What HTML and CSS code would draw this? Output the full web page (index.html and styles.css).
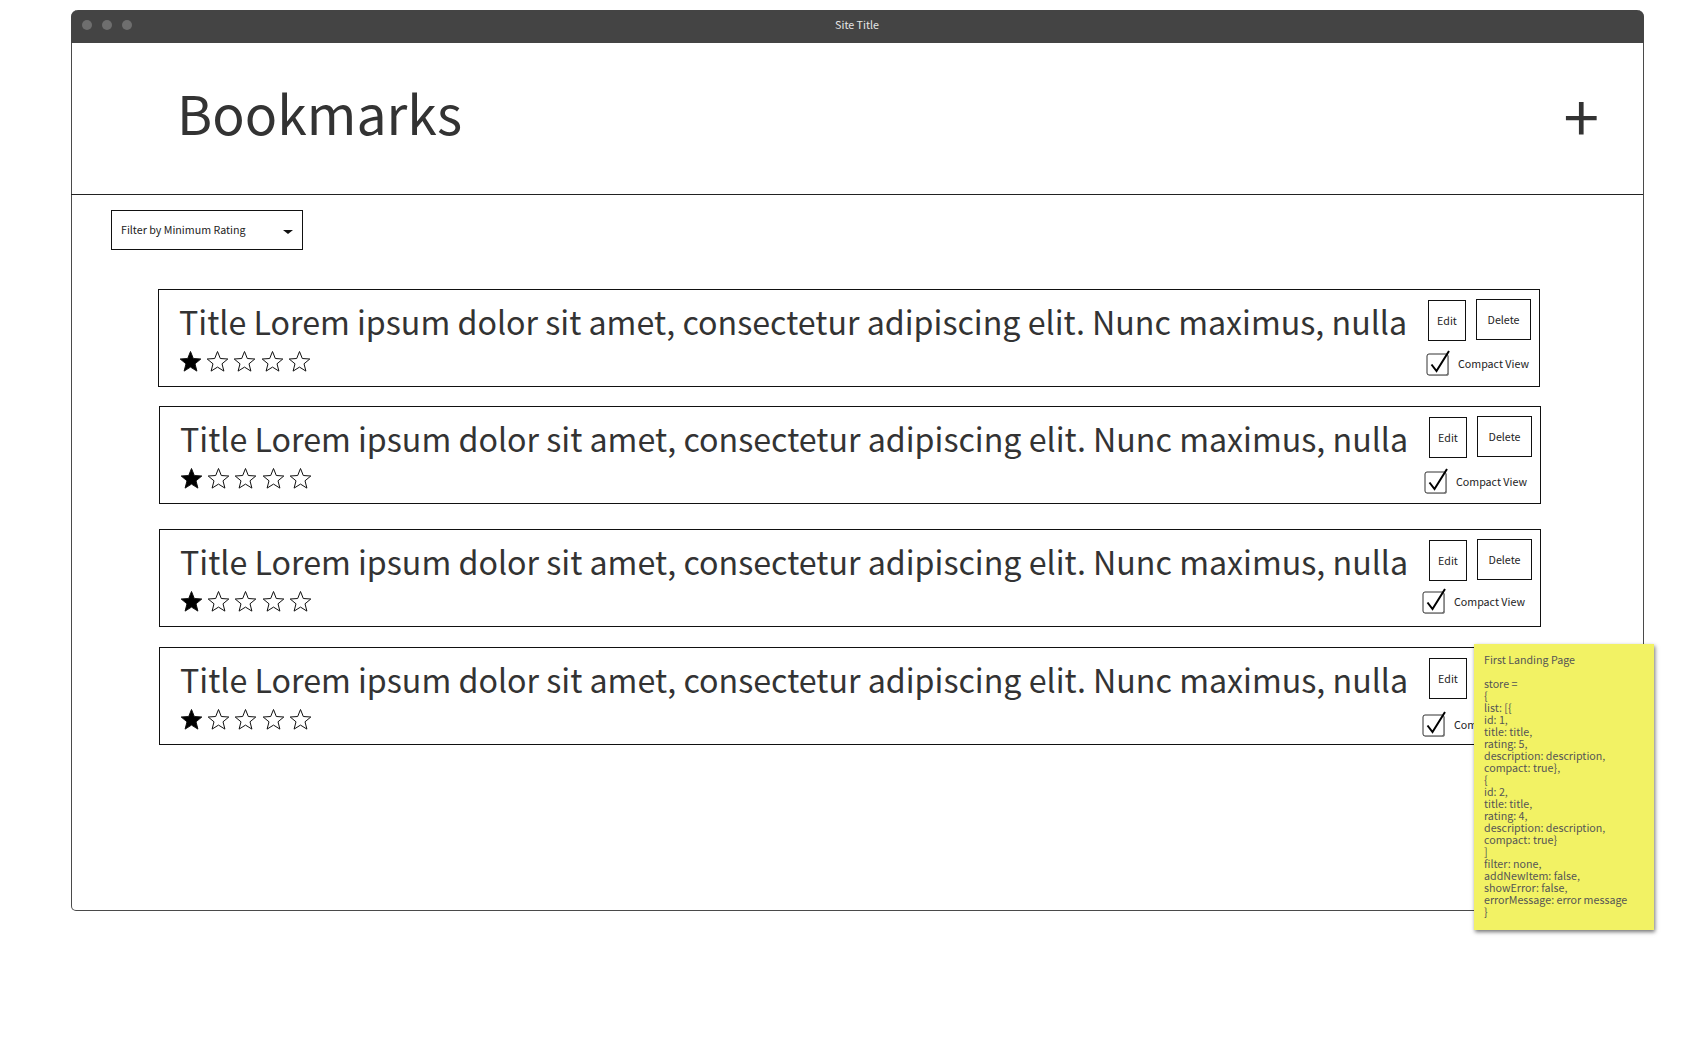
FILE: index.html
```html
<!DOCTYPE html>
<html lang="en">
<head>
<meta charset="utf-8">
<title>Site Title</title>
<link rel="stylesheet" href="styles.css">
</head>
<body>
<svg class="defs" width="0" height="0" aria-hidden="true">
  <defs>
    <path id="star" d="M11.5 1.5 L14.3 8.5 L21.8 9 L16 13.8 L17.9 21.1 L11.5 17.1 L5.1 21.1 L7 13.8 L1.2 9 L8.7 8.5 Z"/>
    <g id="check">
      <rect x="1" y="4" width="21" height="21" rx="2" fill="#fff" stroke="#333" stroke-width="1"/>
      <path d="M22.5 6 V24 Q22.5 25.5 21 25.5 H3" fill="none" stroke="#888" stroke-width="1"/>
      <path d="M5.5 14.5 L10.5 21 L23 1" fill="none" stroke="#000" stroke-width="2"/>
    </g>
  </defs>
</svg>
<main class="window">
  <div class="titlebar">
    <div class="dots"><i class="dot"></i><i class="dot"></i><i class="dot"></i></div>
    <span class="site-title">Site Title</span>
  </div>
  <header class="page-header">
    <h1 class="heading">Bookmarks</h1>
    <span class="add">+</span>
  </header>
  <div class="filter">
    <span class="filter-label">Filter by Minimum Rating</span>
    <span class="caret"></span>
  </div>
  <section class="list">
    <article class="card card-first">
      <div class="info">
        <h2 class="card-title">Title Lorem ipsum dolor sit amet, consectetur adipiscing elit. Nunc maximus, nulla</h2>
        <div class="stars">
          <svg class="star on" viewBox="0 0 23 23"><use href="#star"/></svg>
          <svg class="star" viewBox="0 0 23 23"><use href="#star"/></svg>
          <svg class="star" viewBox="0 0 23 23"><use href="#star"/></svg>
          <svg class="star" viewBox="0 0 23 23"><use href="#star"/></svg>
          <svg class="star" viewBox="0 0 23 23"><use href="#star"/></svg>
        </div>
      </div>
      <div class="actions">
        <div class="buttons"><span class="btn btn-edit">Edit</span><span class="btn btn-delete">Delete</span></div>
        <div class="compact"><svg class="checkbox" viewBox="0 0 24 26"><use href="#check"/></svg><span>Compact View</span></div>
      </div>
    </article>
    <article class="card card-second">
      <div class="info">
        <h2 class="card-title">Title Lorem ipsum dolor sit amet, consectetur adipiscing elit. Nunc maximus, nulla</h2>
        <div class="stars">
          <svg class="star on" viewBox="0 0 23 23"><use href="#star"/></svg>
          <svg class="star" viewBox="0 0 23 23"><use href="#star"/></svg>
          <svg class="star" viewBox="0 0 23 23"><use href="#star"/></svg>
          <svg class="star" viewBox="0 0 23 23"><use href="#star"/></svg>
          <svg class="star" viewBox="0 0 23 23"><use href="#star"/></svg>
        </div>
      </div>
      <div class="actions">
        <div class="buttons"><span class="btn btn-edit">Edit</span><span class="btn btn-delete">Delete</span></div>
        <div class="compact"><svg class="checkbox" viewBox="0 0 24 26"><use href="#check"/></svg><span>Compact View</span></div>
      </div>
    </article>
    <article class="card card-third">
      <div class="info">
        <h2 class="card-title">Title Lorem ipsum dolor sit amet, consectetur adipiscing elit. Nunc maximus, nulla</h2>
        <div class="stars">
          <svg class="star on" viewBox="0 0 23 23"><use href="#star"/></svg>
          <svg class="star" viewBox="0 0 23 23"><use href="#star"/></svg>
          <svg class="star" viewBox="0 0 23 23"><use href="#star"/></svg>
          <svg class="star" viewBox="0 0 23 23"><use href="#star"/></svg>
          <svg class="star" viewBox="0 0 23 23"><use href="#star"/></svg>
        </div>
      </div>
      <div class="actions">
        <div class="buttons"><span class="btn btn-edit">Edit</span><span class="btn btn-delete">Delete</span></div>
        <div class="compact"><svg class="checkbox" viewBox="0 0 24 26"><use href="#check"/></svg><span>Compact View</span></div>
      </div>
    </article>
    <article class="card card-fourth">
      <div class="info">
        <h2 class="card-title">Title Lorem ipsum dolor sit amet, consectetur adipiscing elit. Nunc maximus, nulla</h2>
        <div class="stars">
          <svg class="star on" viewBox="0 0 23 23"><use href="#star"/></svg>
          <svg class="star" viewBox="0 0 23 23"><use href="#star"/></svg>
          <svg class="star" viewBox="0 0 23 23"><use href="#star"/></svg>
          <svg class="star" viewBox="0 0 23 23"><use href="#star"/></svg>
          <svg class="star" viewBox="0 0 23 23"><use href="#star"/></svg>
        </div>
      </div>
      <div class="actions">
        <div class="buttons"><span class="btn btn-edit">Edit</span><span class="btn btn-delete">Delete</span></div>
        <div class="compact"><svg class="checkbox" viewBox="0 0 24 26"><use href="#check"/></svg><span>Compact View</span></div>
      </div>
    </article>
  </section>
</main>
<aside class="note">First Landing Page

store =
{
list: [{
id: 1,
title: title,
rating: 5,
description: description,
compact: true},
{
id: 2,
title: title,
rating: 4,
description: description,
compact: true}
]
filter: none,
addNewItem: false,
showError: false,
errorMessage: error message
}</aside>
</body>
</html>
```

FILE: styles.css
```css
* { box-sizing: border-box; }
html, body { margin: 0; padding: 0; background: #fff; }
body {
  position: relative;
  height: 1040px;
  overflow: hidden;
  padding: 10px 0 0 71px;
  font-family: "Noto Sans CJK SC", "Noto Sans", sans-serif;
  color: #333;
}
.defs { position: absolute; }
.window {
  width: 1573px;
  height: 901px;
  border: 1px solid #4a4a4a;
  border-top: 0;
  border-radius: 7px 7px 5px 5px;
  background: #fff;
}
.titlebar {
  position: relative;
  display: flex;
  align-items: center;
  justify-content: center;
  height: 33px;
  margin: 0 -1px;
  padding-bottom: 3px;
  background: #444;
  border-radius: 7px 7px 0 0;
}
.dots {
  position: absolute;
  left: 11px;
  top: 10px;
  display: flex;
  gap: 10px;
}
.dot {
  display: block;
  width: 10px;
  height: 10px;
  border-radius: 50%;
  background: #6e6e6e;
}
.site-title {
  font-size: 10.7px;
  line-height: 16px;
  margin-right: 1px;
  color: #e6e6e6;
}
.page-header {
  display: flex;
  align-items: flex-start;
  justify-content: space-between;
  height: 152px;
  margin-left: -1px;
  padding: 0 44px 0 106px;
  border-bottom: 1px solid #222;
}
.heading {
  margin: 33px 0 0;
  font-size: 53.6px;
  line-height: 72px;
  font-weight: 400;
  color: #333;
}
.add {
  margin-top: 31px;
  font-size: 64px;
  line-height: 80px;
  color: #333;
}
.filter {
  display: flex;
  align-items: center;
  justify-content: space-between;
  width: 192px;
  height: 40px;
  margin: 15px 0 0 39px;
  padding: 0 9px;
  border: 1px solid #111;
  font-size: 10.7px;
  color: #222;
}
.filter-label { margin-bottom: 2px; }
.caret {
  width: 0;
  height: 0;
  margin-top: 3px;
  margin-right: 0;
  border-left: 5px solid transparent;
  border-right: 5px solid transparent;
  border-top: 4px solid #111;
}
.list {
  display: flex;
  flex-direction: column;
  margin: 39px 0 0 86px;
}
.card {
  display: flex;
  justify-content: space-between;
  width: 1382px;
  height: 98px;
  border: 1px solid #111;
  padding-left: 20px;
}
.card-second, .card-third, .card-fourth { margin-left: 1px; }
.card-second { margin-top: 19px; }
.card-third { margin-top: 25px; }
.card-fourth { margin-top: 20px; }
.info { min-width: 0; }
.card-title {
  margin: 6px 0 0;
  font-size: 32.2px;
  line-height: 50px;
  font-weight: 400;
  white-space: nowrap;
  color: #333;
}
.stars {
  display: flex;
  gap: 4.2px;
  margin-top: 4px;
}
.star {
  display: block;
  width: 23px;
  height: 23px;
  fill: #fff;
  stroke: #111;
  stroke-width: 1;
}
.star.on { fill: #000; }
.actions {
  display: flex;
  flex-direction: column;
  align-items: flex-end;
  width: 130px;
  padding-right: 8px;
}
.buttons {
  display: flex;
  align-items: flex-start;
  gap: 10px;
  margin-top: 9px;
}
.btn {
  display: flex;
  align-items: center;
  justify-content: center;
  height: 41px;
  border: 1px solid #111;
  font-size: 10.7px;
  color: #222;
}
.btn-edit { width: 38px; margin-top: 1px; }
.btn-delete { width: 55px; }
.compact {
  display: flex;
  align-items: center;
  gap: 8px;
  margin-top: 9px;
  margin-right: 2px;
  font-size: 10.7px;
  line-height: 16px;
  color: #222;
  white-space: nowrap;
}
.card-second .compact { margin-right: 5px; margin-top: 10px; }
.card-third .compact { margin-right: 7px; margin-top: 7px; }
.card-fourth .compact { margin-right: 7px; margin-top: 12px; }
.compact span { margin-top: 2px; }
.checkbox {
  display: block;
  width: 24px;
  height: 26px;
}
.note {
  position: absolute;
  left: 1474px;
  top: 644px;
  width: 180px;
  height: 286px;
  padding: 10px 10px;
  background: #f2f264;
  box-shadow: 1px 2px 4px rgba(0, 0, 0, 0.55);
  font-size: 10.7px;
  line-height: 12px;
  color: #555;
  white-space: pre;
}
```
